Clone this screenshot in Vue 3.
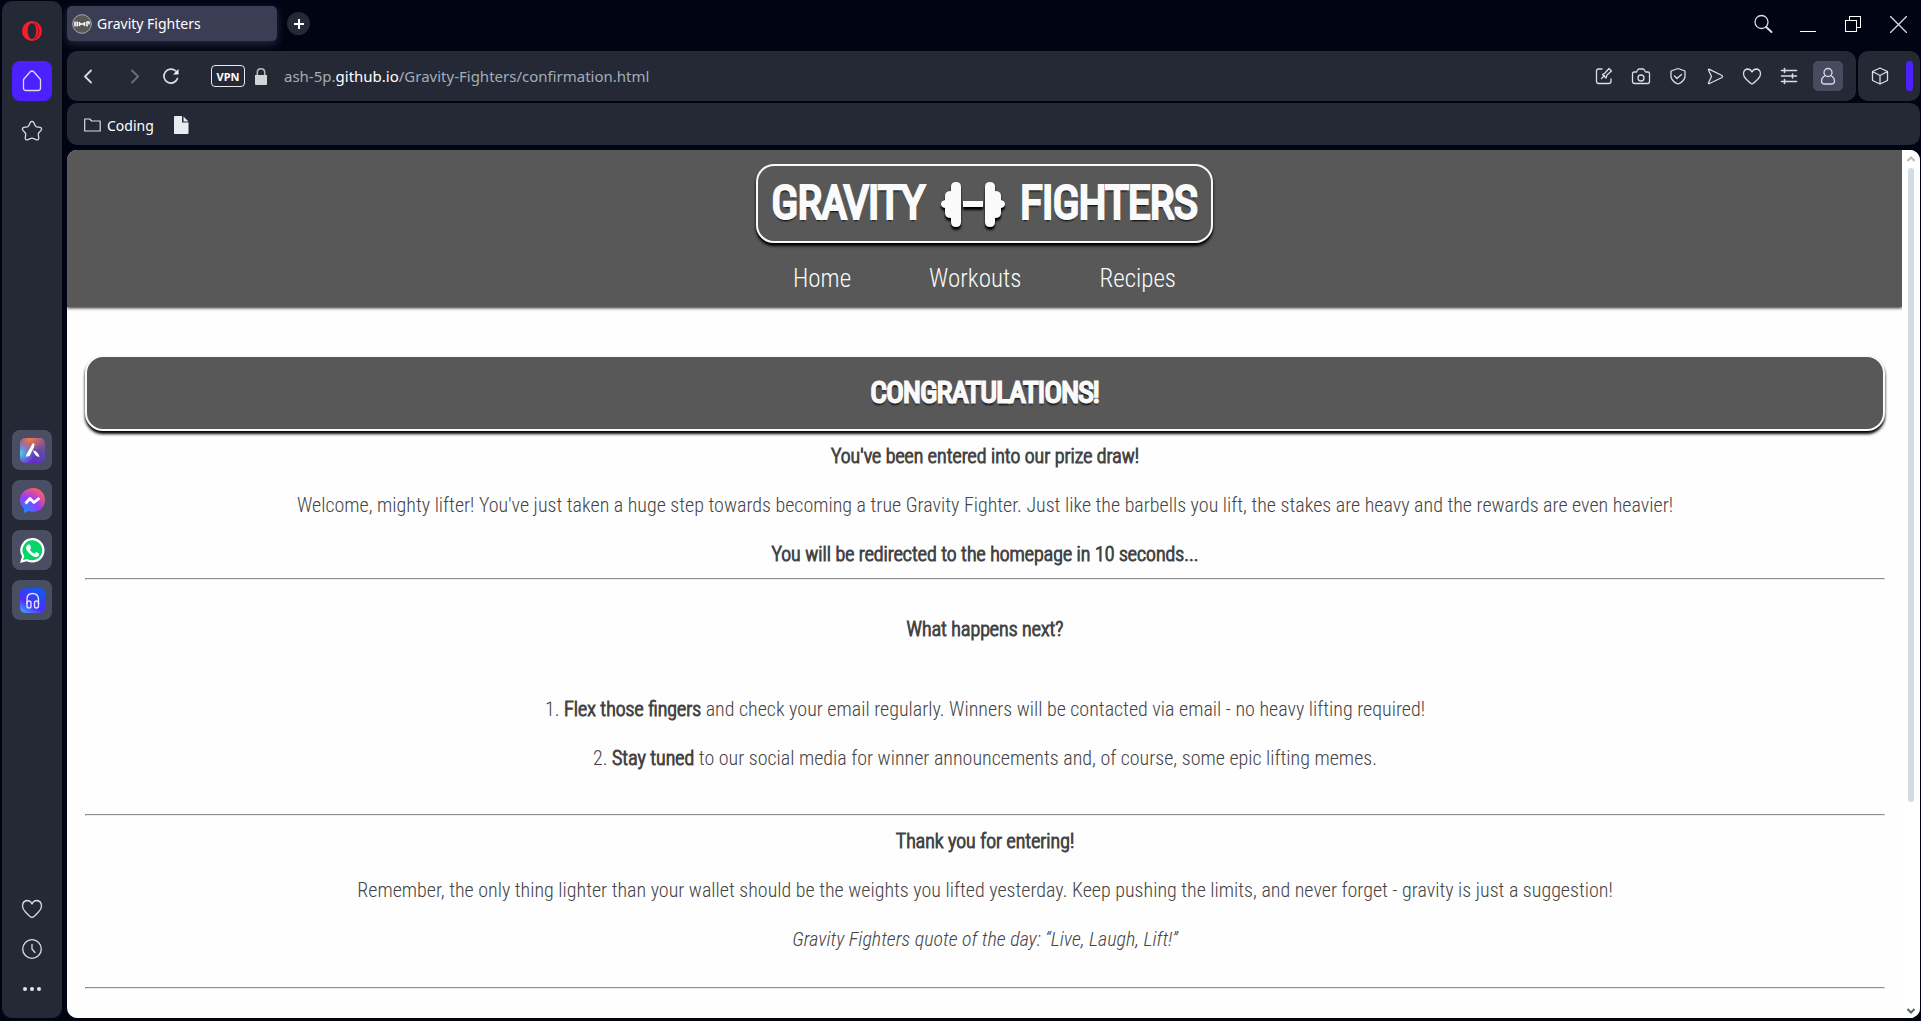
<script setup>
import { ref } from 'vue'

const apps = ['aria', 'messenger', 'whatsapp', 'player']
const links = ['Home', 'Workouts', 'Recipes']
const seconds = ref(10)
</script>

<template>
  <div class="browser">
    <aside class="sidebar">
      <button class="side-btn" aria-label="Opera menu">
        <svg width="22" height="22" viewBox="0 0 22 22"><path fill="#fa1e2d" fill-rule="evenodd" d="M11 1a10 10 0 1 0 0 20a10 10 0 0 0 0-20zM11 3.200c2.600 0 4.300 3.500 4.300 7.800s-1.700 7.800-4.300 7.800s-4.300-3.500-4.300-7.800s1.700-7.800 4.300-7.800z"/><path d="M13.500 2.500Q18 6 18 11t-4.500 8.500" fill="none" stroke="#a70014" stroke-width="1"/></svg>
      </button>
      <button class="side-btn home" aria-label="Home">
        <svg class="line" width="24" height="24" viewBox="0 0 24 24"><path d="M3.500 10.500L10 3q2-2 4 0l6.500 7.500V19q0 2.500-2.500 2.500H6Q3.500 21.500 3.500 19z"/></svg>
      </button>
      <button class="side-btn" aria-label="Pinboards">
        <svg class="line" width="24" height="24" viewBox="0 0 24 24"><path d="M10.300 3.500q1.700-2.300 3.400 0l1.800 3.500q.4.800 1.300.9l3.200.5q2.500.7 1 3l-2.300 2.600q-.6.700-.4 1.600l.5 3.400q-.2 2.500-2.600 1.700L13 19.300q-1-.5-2 0l-3.200 1.400q-2.400.8-2.600-1.700l.5-3.400q.2-.9-.4-1.600L3 11.400q-1.500-2.300 1-3l3.200-.5q.9-.1 1.300-.9z"/></svg>
      </button>
      <div class="apps">
        <button v-for="app in apps" :key="app" class="side-btn app" :aria-label="app">
          <svg v-if="app === 'aria'" width="25" height="25" viewBox="0 0 25 25">
            <defs>
              <linearGradient id="aria-a" x1="1" y1="0" x2="0.300" y2="1"><stop offset="0" stop-color="#9b5a78"/><stop offset="0.500" stop-color="#5a48b0"/><stop offset="1" stop-color="#6a22c8"/></linearGradient>
              <radialGradient id="aria-b" cx="0" cy="0.600" r="0.600"><stop offset="0" stop-color="#52d3f5"/><stop offset="1" stop-color="#52b3f5" stop-opacity="0"/></radialGradient>
              <radialGradient id="aria-c" cx="0.400" cy="0" r="0.600"><stop offset="0" stop-color="#ff7a3a"/><stop offset="1" stop-color="#ff7a5a" stop-opacity="0"/></radialGradient>
            </defs>
            <rect width="25" height="25" rx="5" fill="url(#aria-a)"/><rect width="25" height="25" rx="5" fill="url(#aria-b)"/><rect width="25" height="25" rx="5" fill="url(#aria-c)"/>
            <path fill="#fff" d="M12.500 5.500q1.500-1 2 .8l-.5 3L9.500 18l-3 .8q-1-.5-.5-1.500zM13 12.500q5 .5 6.500 6.500-4.500 0-6.500-6.500z"/>
          </svg>
          <svg v-else-if="app === 'messenger'" width="25" height="25" viewBox="0 0 25 25">
            <defs><radialGradient id="msg" cx="0.150" cy="1" r="1.150"><stop offset="0" stop-color="#0894ff"/><stop offset="0.550" stop-color="#943cff"/><stop offset="0.850" stop-color="#e8508a"/><stop offset="1" stop-color="#ff6968"/></radialGradient></defs>
            <path fill="url(#msg)" d="M13 0C6 0 0 5 0 12q0 5 4 8.500V25l4.500-2q2 .8 4.500.8c7 0 12-5 12-11.800S20 0 13 0z"/>
            <path d="M5.500 15.500l4.500-5 4 4 5.500-4.500" fill="none" stroke="#fff" stroke-width="2.800" stroke-linejoin="round"/>
          </svg>
          <svg v-else-if="app === 'whatsapp'" width="25" height="25" viewBox="0 0 25 25">
            <path fill="#fff" d="M12.500 0A12.200 12.200 0 0 0 2 18.500L0 25l6.700-1.700A12.300 12.300 0 1 0 12.500 0z"/>
            <path fill="#06d46b" d="M12.500 2.300A10 10 0 0 0 4.300 18L3 22l4.200-1.100A10 10 0 1 0 12.500 2.300z"/>
            <path fill="#fff" d="M8.500 6.500h1.200l1.500 3.300-1.300 1.900q1.500 2.800 4.500 4l1.700-1.800 3 1.500q.3 3.200-3.300 3.500-3 0-6.600-3.700T6 9.500Q6.500 7 8.500 6.500z"/>
          </svg>
          <svg v-else width="25" height="25" viewBox="0 0 25 25">
            <defs><linearGradient id="ply" x1="0" y1="1" x2="0.600" y2="0"><stop offset="0" stop-color="#42b0ff"/><stop offset="0.450" stop-color="#4d2bfa"/><stop offset="1" stop-color="#1557f0"/></linearGradient></defs>
            <rect width="25" height="25" rx="5" fill="url(#ply)"/>
            <g fill="none" stroke="#dfe4ff" stroke-width="1.400"><path d="M7 16V11q0-5.500 5.500-5.500T18.500 11v5"/><rect x="7" y="13" width="4" height="7" rx="2"/><rect x="14.500" y="13" width="4" height="7" rx="2"/></g>
          </svg>
        </button>
      </div>
      <div class="side-foot">
        <button class="side-btn" aria-label="Likes"><svg class="line" width="24" height="24" viewBox="0 0 24 24"><path d="M12 20.500Q10.500 20.500 5.500 15 2.500 12 2.500 9q0-5 4.800-5.500Q10.500 3.500 12 7q1.500-3.500 4.700-3.500Q21.500 4 21.500 9q0 3-3 6-5 5.500-6.500 5.500z"/></svg></button>
        <button class="side-btn" aria-label="History"><svg class="line" width="24" height="24" viewBox="0 0 24 24"><circle cx="12" cy="12" r="9.300"/><path d="M12 7.500V12l3 3.500"/></svg></button>
        <button class="side-btn" aria-label="More"><svg width="24" height="24" viewBox="0 0 24 24" fill="#e2e6ee"><circle cx="5" cy="12" r="2"/><circle cx="12" cy="12" r="2"/><circle cx="19" cy="12" r="2"/></svg></button>
      </div>
    </aside>

    <div class="window">
      <div class="tabs">
        <button class="tab">
          <svg width="20" height="20" viewBox="0 0 20 20"><circle cx="10" cy="10" r="9.300" fill="#585858" stroke="#aaa"/><path stroke="#fff" stroke-width="1.500" d="M3 7.500v5M5.200 7.500v5M7.500 8v4M12.500 8v4M15 7.500v5M17 7.500v3M7.500 10h5M15 8h2" /></svg>
          <span>Gravity Fighters</span>
        </button>
        <button class="plus" aria-label="New tab"><svg width="10" height="10" viewBox="0 0 10 10"><path d="M5 0v10M0 5h10" stroke="#fff" stroke-width="2"/></svg></button>
        <div class="controls">
          <button aria-label="Search"><svg class="line" width="20" height="20" viewBox="0 0 20 20"><circle cx="8.500" cy="8" r="6.500"/><path stroke-width="2" d="M13.200 13l5.300 5"/></svg></button>
          <button aria-label="Minimize"><svg class="crisp" width="17" height="17" viewBox="0 0 17 17"><path d="M0 15.500h16"/></svg></button>
          <button aria-label="Restore"><svg class="crisp" width="17" height="17" viewBox="0 0 17 17"><path d="M.5 4.500h11v11H.5zM4.500 4V.5h11v11H12"/></svg></button>
          <button aria-label="Close"><svg class="line" width="17" height="17" viewBox="0 0 17 17"><path d="M.5.500l16 16M16.500.500l-16 16"/></svg></button>
        </div>
      </div>

      <div class="bars">
        <div class="address">
          <button class="nav-btn" aria-label="Back"><svg class="line" width="20" height="20" viewBox="0 0 20 20"><path stroke-width="1.800" d="M13 4.500l-6 6 6 6"/></svg></button>
          <button class="nav-btn dim" aria-label="Forward"><svg class="line" width="20" height="20" viewBox="0 0 20 20"><path stroke-width="1.800" d="M7 4.500l6 6-6 6"/></svg></button>
          <button class="nav-btn reload" aria-label="Reload"><svg class="line" width="20" height="20" viewBox="0 0 20 20"><path stroke-width="1.700" d="M16.500 12.500A7 7 0 1 1 14.800 5"/><path fill="#f0f2f6" stroke="none" d="M17.500 3v5.500H12z"/></svg></button>
          <button class="vpn">VPN</button>
          <svg class="lock" width="12" height="17" viewBox="0 0 12 17"><path fill="#d2d4d6" d="M0 7h12v9q0 1-1 1H1q-1 0-1-1z"/><path fill="none" stroke="#b8bcc2" stroke-width="1.500" d="M2.300 7V4.500Q2.300.800 6 .8t3.700 3.700V7"/></svg>
          <a class="url" href="#">ash-5p.<b>github.io</b>/Gravity-Fighters/confirmation.html</a>
          <div class="tools">
            <button aria-label="Edit page"><svg class="line" width="20" height="20" viewBox="0 0 20 20"><path d="M8 3H4.500Q2.500 3 2.500 5v10q0 2.500 2 2.500h10q2.500 0 2.500-2V13M7.500 12.500l3-3M8.500 8.500l3.500 3.500 1-3 4.500-4-2.500-2.500-4 4.500z"/></svg></button>
            <button aria-label="Snapshot"><svg class="line" width="20" height="20" viewBox="0 0 20 20"><path d="M1.500 7.500q0-1.500 1.500-1.500h2.500L7 3.500q.5-.5 1-.5h4q.5 0 1 .5L14.500 6H17q1.500 0 1.500 1.500v8q0 2-2 2h-13q-2 0-2-2z"/><circle cx="10" cy="12" r="3"/></svg></button>
            <button aria-label="Ad blocker"><svg class="line" width="20" height="20" viewBox="0 0 20 20"><path d="M10 2.500L17 5v6q-1.500 5-7 7-5.500-2-7-7V5zM6.500 10l2.500 2.500 4.500-4"/></svg></button>
            <button aria-label="My Flow"><svg class="line" width="20" height="20" viewBox="0 0 20 20"><path d="M3.500 4q-.5-1 1-.7L17 9.500q1 1 0 2L4.500 17.500q-1.500.3-1-.8L6.500 10.500z"/></svg></button>
            <button aria-label="Bookmark"><svg class="line" width="20" height="20" viewBox="0 0 20 20"><path d="M10 18Q9 18 4 13 1.500 10.500 1.500 8q0-4.500 4-5Q8.500 3 10 6q1.500-3 4.500-3 4 .5 4 5 0 2.500-2.500 5-5 5-6 5z"/></svg></button>
            <button aria-label="Easy setup"><svg class="line" width="20" height="20" viewBox="0 0 20 20"><path stroke-width="1.600" d="M2.500 4.500h15M2.500 10h15M2.500 15.500h15M5.500 2.500v4M13.500 8v4M5.500 13.500v4"/></svg></button>
            <button class="profile" aria-label="Profile"><svg class="line" width="20" height="20" viewBox="0 0 20 20"><circle cx="10" cy="6.500" r="4"/><path d="M7.300 9.500Q3.500 11.500 3.500 15q0 3 3.500 3h6q3.500 0 3.500-3 0-3.500-3.800-5.500"/></svg></button>
          </div>
        </div>
        <div class="extra">
          <button aria-label="Extensions"><svg class="line" width="20" height="20" viewBox="0 0 20 20"><path d="M10 2l7.500 3.500v9L10 18l-7.500-3.500v-9zM2.500 5.500L10 9.500l7.500-4M10 9.500V18"/></svg></button>
          <span class="marker"></span>
        </div>
      </div>

      <div class="bookmarks">
        <a href="#"><svg class="line" width="17" height="14" viewBox="0 0 17 14"><path stroke-width="1.200" d="M.7 1h5l2 2h8.500v10H.7z"/></svg>Coding</a>
        <a href="#" aria-label="Page"><svg width="15" height="18" viewBox="0 0 15 18"><path fill="#e9edf2" d="M1 0h7v6.500h6.500V17q0 1-1 1H1q-1 0-1-1V1q0-1 1-1zM9.500.500l5 5h-5z"/></svg></a>
      </div>

      <div class="page">
        <div class="document">
          <header class="site-head">
            <a class="logo" href="#">
              <span>GRAVITY</span>
              <svg width="64" height="46" viewBox="0 0 64 46"><path fill="#fafafa" d="M10 6q0-5 5-5t5 5v35q0 5-5 5t-5-5v-4q-6 0-6-5v-5q-4-1-4-4t4-4v-4q0-5 6-5zM22 20h20v6H22zM54 6q0-5-5-5t-5 5v35q0 5 5 5t5-5v-4q6 0 6-5v-5q4-1 4-4t-4-4v-4q0-5-6-5z"/></svg>
              <span>FIGHTERS</span>
            </a>
            <nav><a v-for="link in links" :key="link" href="#">{{ link }}</a></nav>
          </header>
          <main>
            <h1>CONGRATULATIONS!</h1>
            <section class="intro">
              <p><strong>You've been entered into our prize draw!</strong></p>
              <p>Welcome, mighty lifter! You've just taken a huge step towards becoming a true Gravity Fighter. Just like the barbells you lift, the stakes are heavy and the rewards are even heavier!</p>
              <p><strong>You will be redirected to the homepage in {{ seconds }} seconds...</strong></p>
            </section>
            <hr>
            <section class="next">
              <h2>What happens next?</h2>
              <ol>
                <li><strong>Flex those fingers</strong> and check your email regularly. Winners will be contacted via email - no heavy lifting required!</li>
                <li><strong>Stay tuned</strong> to our social media for winner announcements and, of course, some epic lifting memes.</li>
              </ol>
            </section>
            <hr>
            <section class="thanks">
              <p><strong>Thank you for entering!</strong></p>
              <p>Remember, the only thing lighter than your wallet should be the weights you lifted yesterday. Keep pushing the limits, and never forget - gravity is just a suggestion!</p>
              <p><em>Gravity Fighters quote of the day: “Live, Laugh, Lift!”</em></p>
            </section>
            <hr>
          </main>
        </div>
        <div class="scroll">
          <svg width="8" height="6" viewBox="0 0 8 6"><path d="M.5 5L4 1.500 7.500 5" fill="none" stroke="#bcbcbc" stroke-width="2"/></svg>
          <div class="track"><div class="thumb"></div></div>
          <svg width="8" height="6" viewBox="0 0 8 6"><path d="M.5 1L4 4.500 7.500 1" fill="none" stroke="#606060" stroke-width="2"/></svg>
        </div>
      </div>
    </div>
  </div>
</template>

<style>
body { margin: 0; background: #000413; }
</style>

<style scoped>
* { box-sizing: border-box; }
button { padding: 0; border: 0; background: none; color: inherit; font: inherit; display: flex; align-items: center; justify-content: center; }
a { color: inherit; text-decoration: none; }
.line { fill: none; stroke: #d8dce4; stroke-width: 1.3; stroke-linecap: round; stroke-linejoin: round; }
.crisp { fill: none; stroke: #fff; stroke-width: 1; shape-rendering: crispEdges; }

.browser { display: flex; gap: 5px; min-height: 100vh; padding: 0 1px 3px 2px; color: #fff; background: #000413; font-family: "Noto Sans", sans-serif; }

.sidebar { flex: none; width: 60px; margin-top: 1px; padding: 10px 0 9px; border-radius: 10px; background: #252935; display: flex; flex-direction: column; align-items: center; gap: 10px; }
.side-btn { flex: none; width: 40px; height: 40px; border-radius: 8px; }
.home { background: #4d20ff; }
.apps { flex: 1; display: flex; flex-direction: column; justify-content: center; gap: 10px; padding-top: 10px; }
.app { background: #4a4e63; }
.side-foot { display: flex; flex-direction: column; }

.window { flex: 1; min-width: 0; display: flex; flex-direction: column; }
.tabs { height: 51px; display: flex; align-items: flex-start; padding-top: 6px; }
.tab { width: 210px; height: 35px; justify-content: flex-start; gap: 5px; padding-left: 5px; border-radius: 5px; background: #3a3d54; box-shadow: 0 3px 8px #282b3c; font-size: 14px; }
.plus { width: 23px; height: 23px; margin: 6px 0 0 10px; border-radius: 50%; background: #252935; }
.controls { margin-left: auto; display: flex; gap: 25px; padding: 8px 12px 0 0; }
.controls button { width: 20px; height: 20px; }

.bars { display: flex; gap: 2px; height: 50px; }
.address, .extra { display: flex; align-items: center; background: #252935; border-radius: 10px; }
.address { flex: 1; min-width: 0; padding: 0 13px 0 11px; }
.nav-btn { width: 20px; height: 20px; margin-right: 27px; }
.dim { opacity: 0.4; margin-right: 16px; }
.reload { margin-right: 30px; }
.vpn { width: 34px; height: 22px; border: 1px solid #e6e8ee; border-radius: 4px; font-size: 11px; font-weight: 700; }
.lock { margin: 0 17px 0 10px; }
.url { color: #a3adba; font-size: 15px; }
.url b { color: #fff; font-weight: 400; }
.tools { margin-left: auto; display: flex; align-items: center; gap: 17px; }
.tools .profile { width: 30px; height: 30px; margin-left: -3px; border-radius: 5px; background: #474b60; }
.extra { width: 62px; justify-content: space-between; padding: 0 7px 0 12px; }
.marker { width: 7px; height: 30px; border-radius: 4px; background: #4d20ff; }

.bookmarks { display: flex; align-items: center; gap: 20px; height: 42px; margin: 2px 0 5px; padding: 2px 0 0 17px; border-radius: 10px; background: #252935; font-size: 14px; }
.bookmarks a { display: flex; align-items: center; gap: 6px; }

.page { flex: 1; display: flex; overflow: hidden; border-radius: 10px; background: #fefefe; color: #444; font: 300 20px/29px "Roboto Condensed", "Liberation Sans Narrow", Roboto, sans-serif; }
.document { flex: 1; min-width: 0; }
.site-head { padding: 14px 0 13px; display: flex; flex-direction: column; align-items: center; gap: 21px; color: #fafafa; background: #585858; box-shadow: 0 1px 3px #222; }
.logo { height: 79px; display: flex; align-items: center; gap: 16px; padding: 0 14px; border: 2px solid #fafafa; border-radius: 18px; box-shadow: 0 3px 3px #000; font-size: 44px; font-weight: 300; -webkit-text-stroke: 4px #fafafa; text-shadow: 0 3px 2px #000; }
.logo svg { filter: drop-shadow(0 3px 1px #000); }
nav { display: flex; gap: 78px; font-size: 25px; font-weight: 300; line-height: 30px; }

main { padding: 48px 17px 0 18px; text-align: center; }
h1 { height: 76px; margin: 0; border: 2px solid #fafafa; border-radius: 18px; background: #585858; box-shadow: 0 3px 3px #000; color: #fafafa; font-size: 28px; line-height: 72px; font-weight: 300; -webkit-text-stroke: 3px #fafafa; text-shadow: 0 3px 2px #000; }
h2 { margin: 0; font-size: 20px; }
p { margin: 0; }
strong, h2 { font-weight: 300; -webkit-text-stroke: 1px; }
hr { height: 2px; margin: 0; border: 1px solid; border-color: #8e8e8e #ededed #ededed #8e8e8e; }
.intro { display: flex; flex-direction: column; gap: 20px; padding: 11px 0 9px; }
.next { padding: 35px 0 41px; }
ol { list-style-position: inside; margin: 51px 0 0; padding: 0; display: flex; flex-direction: column; gap: 20px; }
.thanks { display: flex; flex-direction: column; gap: 20px; padding: 11px 0 33px; }

.scroll { flex: none; width: 18px; display: flex; flex-direction: column; align-items: center; gap: 6px; padding: 6px 0 4px; background: #fff; }
.track { flex: 1; width: 6px; }
.thumb { height: 76%; border-radius: 3px; background: #d2dce4; }
</style>
